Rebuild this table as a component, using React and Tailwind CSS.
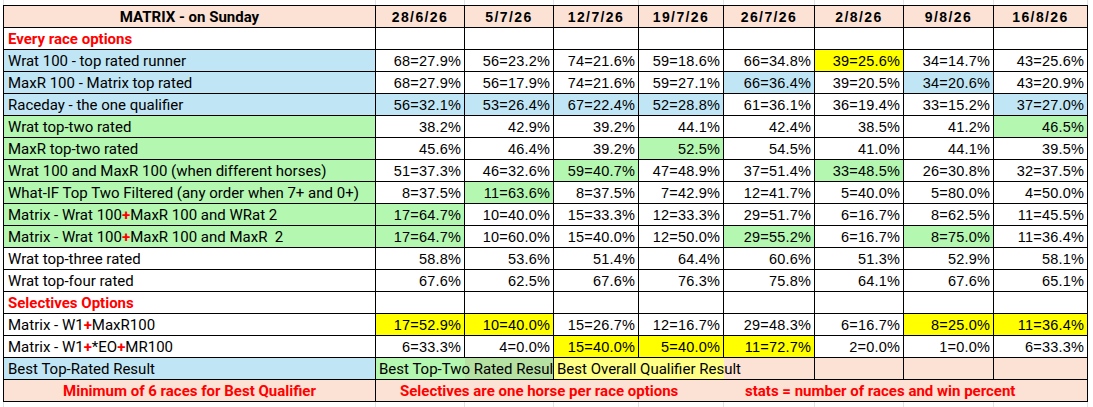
import React from "react";

const dates = ["28/6/26", "5/7/26", "12/7/26", "19/7/26", "26/7/26", "2/8/26", "9/8/26", "16/8/26"];

const bgs = {
  w: "bg-white",
  b: "bg-[#c0e6f5]",
  g: "bg-[#b3f7b0]",
  y: "bg-[#ffff00]",
  p: "bg-[#fbe2d5]",
};

const gridCols = "grid-cols-[371px_88px_88px_84px_84px_90px_88px_89px_93px]";

const Plus = () => <span className="font-bold text-[#ff0000]">+</span>;

// value strings: "text|colour" (colour defaults to white)
const rows = [
  { label: "Wrat 100 - top rated runner", bg: "b", v: ["68=27.9%", "56=23.2%", "74=21.6%", "59=18.6%", "66=34.8%", "39=25.6%|y", "34=14.7%", "43=25.6%"] },
  { label: "MaxR 100 - Matrix top rated", bg: "b", v: ["68=27.9%", "56=17.9%", "74=21.6%", "59=27.1%", "66=36.4%|b", "39=20.5%", "34=20.6%|b", "43=20.9%"] },
  { label: "Raceday - the one qualifier", bg: "b", v: ["56=32.1%|b", "53=26.4%|b", "67=22.4%|b", "52=28.8%|b", "61=36.1%", "36=19.4%", "33=15.2%", "37=27.0%|b"] },
  { label: "Wrat top-two rated", bg: "g", v: ["38.2%", "42.9%", "39.2%", "44.1%", "42.4%", "38.5%", "41.2%", "46.5%|g"] },
  { label: "MaxR top-two rated", bg: "g", v: ["45.6%", "46.4%", "39.2%", "52.5%|g", "54.5%", "41.0%", "44.1%", "39.5%"] },
  { label: "Wrat 100 and MaxR 100 (when different horses)", bg: "g", v: ["51=37.3%", "46=32.6%", "59=40.7%|g", "47=48.9%", "37=51.4%", "33=48.5%|g", "26=30.8%", "32=37.5%"] },
  { label: "What-IF Top Two Filtered (any order when 7+ and 0+)", bg: "g", v: ["8=37.5%", "11=63.6%|g", "8=37.5%", "7=42.9%", "12=41.7%", "5=40.0%", "5=80.0%", "4=50.0%"] },
  { label: <>Matrix - Wrat 100<Plus />MaxR 100 and WRat 2</>, bg: "g", v: ["17=64.7%|g", "10=40.0%", "15=33.3%", "12=33.3%", "29=51.7%", "6=16.7%", "8=62.5%", "11=45.5%"] },
  { label: <>Matrix - Wrat 100<Plus />MaxR 100 and MaxR&nbsp; 2</>, bg: "g", v: ["17=64.7%|g", "10=60.0%", "15=40.0%", "12=50.0%", "29=55.2%|g", "6=16.7%", "8=75.0%|g", "11=36.4%"] },
  { label: "Wrat top-three rated", bg: "w", v: ["58.8%", "53.6%", "51.4%", "64.4%", "60.6%", "51.3%", "52.9%", "58.1%"] },
  { label: "Wrat top-four rated", bg: "w", v: ["67.6%", "62.5%", "67.6%", "76.3%", "75.8%", "64.1%", "67.6%", "65.1%"] },
];

const selectives = [
  { label: <>Matrix - W1<Plus />MaxR100</>, bg: "w", v: ["17=52.9%|y", "10=40.0%|y", "15=26.7%", "12=16.7%", "29=48.3%", "6=16.7%", "8=25.0%|y", "11=36.4%|y"] },
  { label: <>Matrix - W1<Plus />*EO<Plus />MR100</>, bg: "w", v: ["6=33.3%", "4=0.0%", "15=40.0%|y", "5=40.0%|y", "11=72.7%|y", "2=0.0%", "1=0.0%", "6=33.3%"] },
];

const labelFont = "font-['Roboto','Liberation_Sans',sans-serif] text-[15px] text-black";
const numFont = "font-['Liberation_Sans',Arial,sans-serif] text-[14.5px] tracking-[0.2px] text-black";
const noteFont = "font-['Roboto','Liberation_Sans',sans-serif] text-[15px] font-bold text-[#ff0000]";

const Label = ({ children, bg = "w" }) => (
  <div className={`${bgs[bg]} ${labelFont} flex items-center pl-[4px] pt-px whitespace-nowrap overflow-hidden`}>
    {children}
  </div>
);

const Value = ({ raw }) => {
  const [text, c = "w"] = raw.split("|");
  return (
    <div className={`${bgs[c]} ${numFont} flex items-center justify-end pr-[3px] pt-[2px]`}>
      {text}
    </div>
  );
};

const Empty = ({ bg = "w" }) => <div className={bgs[bg]} />;

const DataRow = ({ row }) => (
  <>
    <Label bg={row.bg}>{row.label}</Label>
    {row.v.map((raw, i) => (
      <Value key={i} raw={raw} />
    ))}
  </>
);

const SectionRow = ({ title }) => (
  <>
    <div className={`bg-white font-['Roboto','Liberation_Sans',sans-serif] text-[15px] font-bold text-[#ff0000] flex items-center pl-[4px] pt-px`}>
      {title}
    </div>
    {dates.map((d) => (
      <Empty key={d} />
    ))}
  </>
);

const GridStrip = () => (
  <div className={`grid ${gridCols} gap-px bg-[#e1e1e1] px-px h-[5px] w-fit ml-[3px]`}>
    {Array.from({ length: 9 }).map((_, i) => (
      <div key={i} className="bg-white" />
    ))}
  </div>
);

export default function App() {
  return (
    <div className="w-[1093px] h-[407px] bg-white overflow-hidden">
      <GridStrip />
      <div className={`grid ${gridCols} auto-rows-[21px] gap-px bg-black p-px w-fit ml-[3px]`}>
        {/* header */}
        <div className={`${bgs.p} ${labelFont} font-bold flex items-center justify-center pt-px`}>MATRIX - on Sunday</div>
        {dates.map((d) => (
          <div
            key={d}
            className={`${bgs.p} font-['Liberation_Sans',Arial,sans-serif] text-[14px] font-bold tracking-[1.4px] text-black flex items-center justify-center pt-px`}
          >
            {d}
          </div>
        ))}

        <SectionRow title="Every race options" />
        {rows.map((r, i) => (
          <DataRow key={i} row={r} />
        ))}

        <SectionRow title="Selectives Options" />
        {selectives.map((r, i) => (
          <DataRow key={i} row={r} />
        ))}

        {/* best results row */}
        <Label bg="b">Best Top-Rated Result</Label>
        <div className={`col-span-2 bg-[linear-gradient(to_right,#b3f7b0_89px,#b5e1a3_89px)] ${labelFont} flex items-center pl-[3px] pt-px whitespace-nowrap overflow-hidden`}>
          Best Top-Two Rated Result
        </div>
        <div className={`col-span-3 bg-[linear-gradient(to_right,#ffff85_170px,#fbe2d5_170px)] ${labelFont} flex items-center pl-[3px] pt-px whitespace-nowrap overflow-hidden`}>
          Best Overall Qualifier Result
        </div>
        <Empty bg="p" />
        <Empty bg="p" />
        <Empty bg="p" />

        {/* notes row */}
        <div className={`${bgs.p} ${noteFont} flex items-center justify-center pt-px`}>
          Minimum of 6 races for Best Qualifier
        </div>
        <div className={`col-span-8 ${bgs.p} ${noteFont} flex items-center pt-px whitespace-nowrap`}>
          <span className="w-[369px] pl-[24px] shrink-0">Selectives are one horse per race options</span>
          <span>stats = number of races and win percent</span>
        </div>
      </div>
      <GridStrip />
    </div>
  );
}
